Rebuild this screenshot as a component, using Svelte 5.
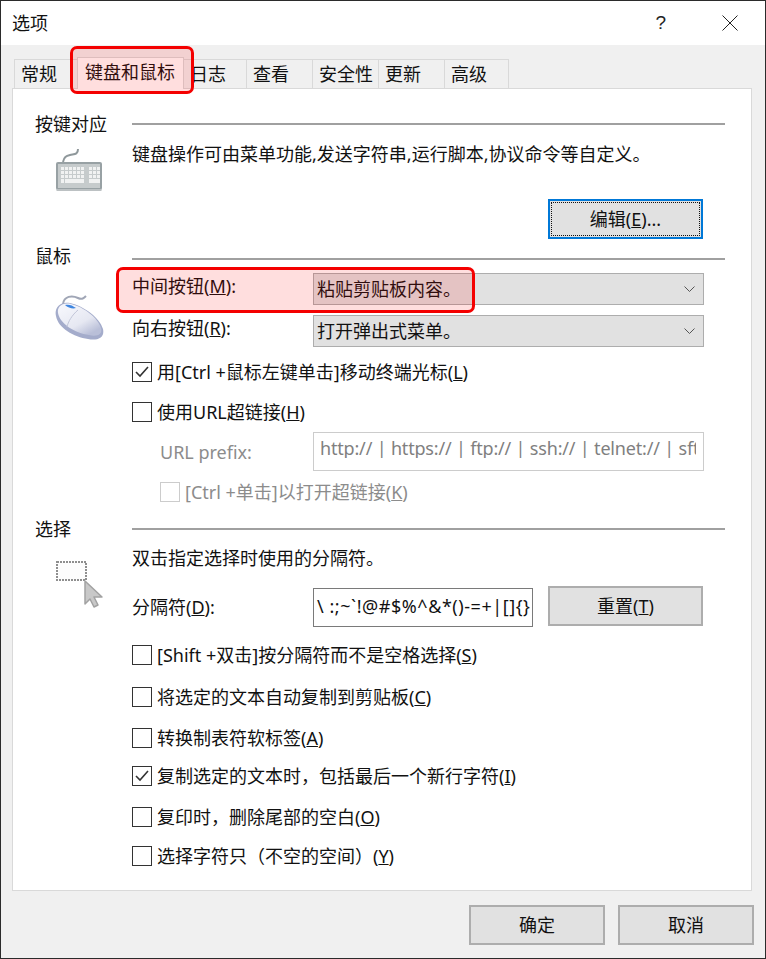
<script>
  const tabs = ['常规', '键盘和鼠标', '日志', '查看', '安全性', '更新', '高级'];
  const widths = [64, 107, 64, 67, 67, 67, 65];
  const keyRows = [
    { y: 167, xs: [61, 65, 69, 73, 77, 81, 89, 93, 97] },
    { y: 171, xs: [61, 65, 69, 73, 77, 81, 89, 93, 97] },
    { y: 175, xs: [61, 65, 69, 73, 77, 81, 89, 93, 97] }
  ];
</script>

<div class="window">
  <header class="titlebar">
    <span class="title">选项</span>
    <span class="help">?</span>
    <svg class="close" width="16" height="16" viewBox="0 0 16 16">
      <path d="M0.5 0.5 L15.5 15.5 M15.5 0.5 L0.5 15.5" stroke="#222" stroke-width="1" fill="none" />
    </svg>
  </header>

  <div class="tabs">
    {#each tabs as tab, i}
      <div class="tab" class:active={i === 1} style="width: {widths[i]}px">{tab}</div>
    {/each}
  </div>

  <main class="panel">
    <section class="group first">
      <div class="group-head">
        <span class="group-title">按键对应</span>
        <span class="rule"></span>
      </div>
      <div class="group-body">
        <div class="icon-col">
          <svg class="icon keyboard" width="48" height="46" viewBox="55 148 48 46">
            <path d="M78 149 C78 155 74 154 70 155 C66 156 64 157 63 162" stroke="#8f989b" stroke-width="2" fill="none" />
            <rect x="56" y="162" width="46" height="28" rx="2" fill="#98a1a4" />
            <rect x="58" y="164" width="42" height="24" fill="#c6cbcc" />
            <rect x="56.5" y="189" width="45" height="2" fill="#bcc1c3" />
            {#each keyRows as row}
              {#each row.xs as x}
                <rect {x} y={row.y} width="3" height="3" fill="#f1f2f2" />
              {/each}
            {/each}
            <rect x="61" y="179" width="3" height="4" fill="#f1f2f2" />
            <rect x="65" y="179" width="19" height="4" fill="#f1f2f2" />
            <rect x="89" y="179" width="11" height="4" fill="#f1f2f2" />
          </svg>
        </div>
        <div class="fields">
          <p class="desc">键盘操作可由菜单功能,发送字符串,运行脚本,协议命令等自定义。</p>
          <div class="edit-row">
            <div class="btn focused"><span class="dots"><span>编辑(<u>E</u>)...</span></span></div>
          </div>
        </div>
      </div>
    </section>

    <section class="group mouse">
      <div class="group-head">
        <span class="group-title">鼠标</span>
        <span class="rule low"></span>
      </div>
      <div class="group-body">
        <div class="icon-col">
          <svg class="icon mouse-icon" width="50" height="50" viewBox="54 292 50 50">
            <defs>
              <linearGradient id="mouseFill" x1="0.2" y1="0.1" x2="0.8" y2="0.9">
                <stop offset="0" stop-color="#f4f5fb" />
                <stop offset="0.6" stop-color="#e6e8f2" />
                <stop offset="1" stop-color="#b9bfd8" />
              </linearGradient>
            </defs>
            <path d="M63 304 C64 296 72 295 78 298 C82 300 84 298 86 296" stroke="#a0a6b6" stroke-width="2" fill="none" />
            <path d="M56 316 C54 308 60 301 70 303 C84 306 100 318 103 329 C105 338 97 341 88 339 C74 337 58 328 56 316 Z" fill="#a4accb" />
            <path d="M58 313 C57 307 62 302 71 304 C84 307 98 318 101 328 C103 335 96 337 89 335 C75 333 60 324 58 313 Z" fill="url(#mouseFill)" />
            <path d="M65 305 C69 304 72 305 76 308 C73 309 68 308 65 305 Z" fill="#3f86e0" />
            <path d="M78 310 C72 315 68 322 67 327" stroke="#c1c5d8" stroke-width="1" fill="none" />
          </svg>
        </div>
        <div class="fields">
          <div class="form-row first-select">
            <span class="label lifted">中间按钮(<u>M</u>):</span>
            <div class="select"><span>粘贴剪贴板内容。</span>
              <svg width="11" height="7" viewBox="0 0 11 7"><path d="M0.5 0.5 L5.5 5.5 L10.5 0.5" stroke="#555" fill="none" /></svg>
            </div>
          </div>
          <div class="form-row second-select">
            <span class="label lifted">向右按钮(<u>R</u>):</span>
            <div class="select"><span>打开弹出式菜单。</span>
              <svg width="11" height="7" viewBox="0 0 11 7"><path d="M0.5 0.5 L5.5 5.5 L10.5 0.5" stroke="#555" fill="none" /></svg>
            </div>
          </div>
          <div class="check m15">
            <span class="box">
              <svg width="14" height="12" viewBox="0 0 14 12"><path d="M1 6 L5 10 L13 1" stroke="#333" stroke-width="1.6" fill="none" /></svg>
            </span>
            <span>用[Ctrl +鼠标左键单击]移动终端光标(<u>L</u>)</span>
          </div>
          <div class="check m20">
            <span class="box"></span>
            <span>使用URL超链接(<u>H</u>)</span>
          </div>
          <div class="form-row url-row">
            <span class="label muted">URL prefix:</span>
            <div class="input url"><span>http:// | https:// | ftp:// | ssh:// | telnet:// | sft</span></div>
          </div>
          <div class="check disabled">
            <span class="box"></span>
            <span>[Ctrl +单击]以打开超链接(<u>K</u>)</span>
          </div>
        </div>
      </div>
    </section>

    <section class="group select-group">
      <div class="group-head">
        <span class="group-title">选择</span>
        <span class="rule"></span>
      </div>
      <div class="group-body">
        <div class="icon-col">
          <svg class="icon select-icon" width="50" height="50" viewBox="55 560 50 50">
            <rect x="57" y="562" width="29" height="18" fill="#fdfdfd" stroke="#8f8f8f" stroke-width="2" stroke-dasharray="2 1" />
            <path d="M85 581 L85 604 L90 599 L94 607 L98 605 L94 597 L102 597 Z" fill="#c8c8c8" stroke="#a2a2a2" stroke-width="1.5" stroke-linejoin="round" />
          </svg>
        </div>
        <div class="fields">
          <p class="desc select-desc">双击指定选择时使用的分隔符。</p>
          <div class="form-row delim-row">
            <span class="label">分隔符(<u>D</u>):</span>
            <div class="input delim"><span>\ :;~`!@#$%^&amp;*()-=+|[]{'{'}{'}'}</span></div>
            <div class="btn reset"><span>重置(<u>T</u>)</span></div>
          </div>
          <div class="check m18">
            <span class="box"></span>
            <span>[Shift +双击]按分隔符而不是空格选择(<u>S</u>)</span>
          </div>
          <div class="check m22">
            <span class="box"></span>
            <span>将选定的文本自动复制到剪贴板(<u>C</u>)</span>
          </div>
          <div class="check m21">
            <span class="box"></span>
            <span>转换制表符软标签(<u>A</u>)</span>
          </div>
          <div class="check m18">
            <span class="box">
              <svg width="14" height="12" viewBox="0 0 14 12"><path d="M1 6 L5 10 L13 1" stroke="#333" stroke-width="1.6" fill="none" /></svg>
            </span>
            <span>复制选定的文本时，包括最后一个新行字符(<u>I</u>)</span>
          </div>
          <div class="check m21">
            <span class="box"></span>
            <span>复印时，删除尾部的空白(<u>O</u>)</span>
          </div>
          <div class="check m19">
            <span class="box"></span>
            <span>选择字符只（不空的空间）(<u>Y</u>)</span>
          </div>
        </div>
      </div>
    </section>
  </main>

  <footer class="actions">
    <div class="btn action">确定</div>
    <div class="btn action">取消</div>
  </footer>

  <div class="mark mark-tab"></div>
  <div class="mark mark-row"></div>
</div>

<style>
  :global(body) {
    margin: 0;
    background: #f0f0f0;
  }

  .window {
    position: relative;
    box-sizing: border-box;
    width: 766px;
    height: 959px;
    border: 1px solid #2b2b2b;
    background: #f0f0f0;
    color: #111;
    font-family: "Noto Sans", "Noto Sans CJK SC", sans-serif;
    font-size: 18px;
    line-height: 20px;
    overflow: hidden;
  }

  .titlebar {
    display: flex;
    align-items: center;
    height: 44px;
    padding: 0 27px 0 11px;
    background: #fff;
  }

  .title {
    flex: 1;
  }

  .help {
    margin-right: 56px;
    font-family: "Liberation Sans", sans-serif;
    font-size: 19px;
    color: #222;
  }

  .close {
    display: block;
  }

  .tabs {
    display: flex;
    align-items: flex-end;
    height: 43px;
    padding-left: 13px;
  }

  .tab {
    box-sizing: border-box;
    display: flex;
    align-items: center;
    height: 29px;
    padding-left: 6px;
    border: 1px solid #d9d9d9;
    border-bottom: none;
    margin-right: -1px;
    background: #f0f0f0;
  }

  .tab.active {
    position: relative;
    z-index: 1;
    height: 32px;
    margin-bottom: -1px;
    padding: 0 0 3px 7px;
    background: #fff;
  }

  .panel {
    box-sizing: border-box;
    height: 803px;
    margin: 0 13px 0 11px;
    padding: 25px 26px 0 22px;
    border: 1px solid #d9d9d9;
    background: #fff;
  }

  .group-head {
    display: flex;
    align-items: center;
    height: 20px;
  }

  .group-title {
    width: 97px;
    flex-shrink: 0;
  }

  .rule {
    flex: 1;
    height: 2px;
    background: #a0a0a0;
  }

  .rule.low {
    margin-top: 6px;
  }

  .group.mouse {
    margin-top: 7px;
  }

  .group.select-group {
    margin-top: 17px;
  }

  .group-body {
    display: flex;
  }

  .icon-col {
    width: 97px;
    flex-shrink: 0;
  }

  .icon {
    display: block;
    filter: blur(0.35px);
  }

  .keyboard {
    margin: 14px 0 0 20px;
  }

  .mouse-icon {
    margin: 26px 0 0 19px;
  }

  .select-icon {
    margin: 21px 0 0 20px;
  }

  .fields {
    flex: 1;
    min-width: 0;
  }

  .desc {
    margin: 10px 0 0;
    height: 20px;
  }

  .select-desc {
    margin-top: 9px;
  }

  .edit-row {
    display: flex;
    justify-content: flex-end;
    margin: 35px 22px 0 0;
  }

  .btn {
    box-sizing: border-box;
    display: flex;
    align-items: center;
    justify-content: center;
    border: 2px solid #adadad;
    background: #e1e1e1;
  }

  .btn.focused {
    width: 155px;
    height: 40px;
    border-color: #0078d7;
    padding: 1px;
  }

  .dots {
    box-sizing: border-box;
    display: flex;
    align-items: center;
    justify-content: center;
    width: 100%;
    height: 100%;
    border: 1px dotted #111;
  }

  .form-row {
    display: flex;
    align-items: center;
  }

  .first-select {
    margin-top: 7px;
  }

  .second-select {
    margin-top: 10px;
  }

  .label {
    width: 181px;
    flex-shrink: 0;
  }

  .lifted {
    margin-top: -6px;
  }

  .muted {
    color: #8c8c8c;
    padding-left: 28px;
    box-sizing: border-box;
  }

  .select {
    box-sizing: border-box;
    display: flex;
    align-items: center;
    justify-content: space-between;
    width: 391px;
    height: 32px;
    padding: 0 8px 0 3px;
    border: 1px solid #adadad;
    background: #e1e1e1;
  }

  .input {
    box-sizing: border-box;
    background: #fff;
    overflow: hidden;
    white-space: nowrap;
  }

  .url-row {
    margin-top: 10px;
  }

  .url {
    width: 391px;
    height: 39px;
    padding: 5px 7px 0 6px;
    border: 1px solid #cccccc;
    color: #808080;
    letter-spacing: -0.18px;
  }

  .url span {
    display: block;
    overflow: hidden;
  }

  .delim-row {
    margin-top: 18px;
    align-items: flex-start;
    height: 41px;
  }

  .delim-row .label {
    margin-top: 11px;
  }

  .delim {
    width: 220px;
    height: 39px;
    margin-top: 2px;
    padding: 7px 0 0 3px;
    border: 1px solid #7a7a7a;
    letter-spacing: 0.55px;
  }

  .btn.reset {
    width: 155px;
    height: 40px;
    margin-left: 15px;
  }

  .check {
    display: flex;
    align-items: center;
    height: 20px;
  }

  .box {
    box-sizing: border-box;
    display: flex;
    align-items: center;
    justify-content: center;
    width: 20px;
    height: 20px;
    margin-right: 5px;
    border: 1px solid #333;
    background: #fff;
  }

  .check.disabled {
    margin: 11px 0 0 28px;
    color: #8c8c8c;
  }

  .check.disabled .box {
    border-color: #ccc;
  }

  .m15 {
    margin-top: 15px;
  }

  .m18 {
    margin-top: 18px;
  }

  .m19 {
    margin-top: 19px;
  }

  .m20 {
    margin-top: 20px;
  }

  .m21 {
    margin-top: 21px;
  }

  .m22 {
    margin-top: 22px;
  }

  .actions {
    display: flex;
    justify-content: flex-end;
    gap: 13px;
    margin-top: 14px;
    padding-right: 11px;
  }

  .btn.action {
    width: 136px;
    height: 40px;
  }

  .mark {
    position: absolute;
    z-index: 2;
    box-sizing: border-box;
    border: 3px solid #f40000;
    border-radius: 7px;
    background: rgba(255, 0, 0, 0.13);
  }

  .mark-tab {
    left: 69px;
    top: 45px;
    width: 124px;
    height: 48px;
  }

  .mark-row {
    left: 115px;
    top: 266px;
    width: 359px;
    height: 46px;
  }
</style>
